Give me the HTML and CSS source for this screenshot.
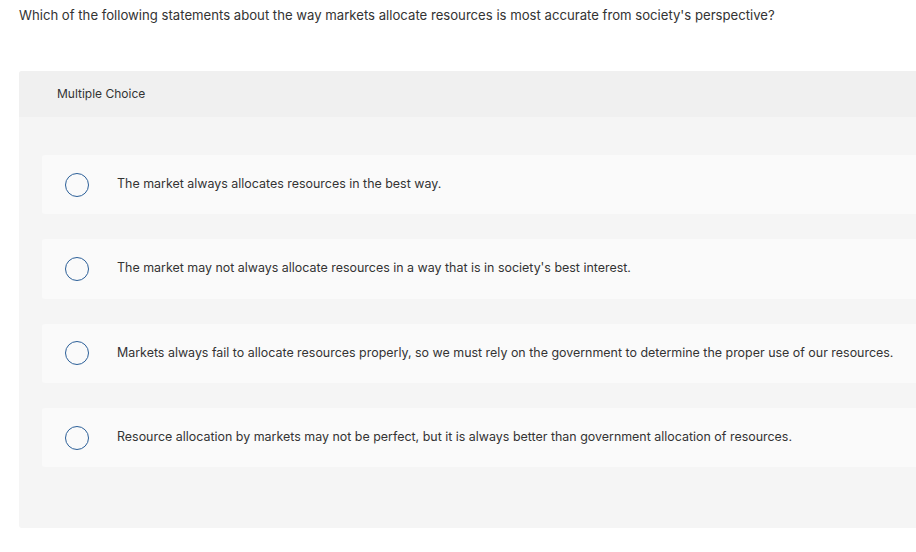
FILE: index.html
```html
<!DOCTYPE html>
<html lang="en">
<head>
  <meta charset="UTF-8">
  <title>Multiple Choice</title>
  <link rel="stylesheet" href="styles.css">
</head>
<body>

  <p class="prompt">Which of the following statements about the way markets allocate resources is most accurate from society's perspective?</p>

  <div class="question">
    <div class="question-head">Multiple Choice</div>
    <div class="choices">
      <label class="choice">
        <span class="radio"></span>
        <span class="choice-text">The market always allocates resources in the best way.</span>
      </label>
      <label class="choice">
        <span class="radio"></span>
        <span class="choice-text">The market may not always allocate resources in a way that is in society's best interest.</span>
      </label>
      <label class="choice">
        <span class="radio"></span>
        <span class="choice-text">Markets always fail to allocate resources properly, so we must rely on the government to determine the proper use of our resources.</span>
      </label>
      <label class="choice">
        <span class="radio"></span>
        <span class="choice-text">Resource allocation by markets may not be perfect, but it is always better than government allocation of resources.</span>
      </label>
    </div>
  </div>

</body>
</html>
```

FILE: styles.css
```css
html, body {
  overflow: hidden;
}

body {
  margin: 0;
  padding: 0 0 0 19px;
  font-family: Inter, "Liberation Sans", Arial, sans-serif;
  color: #333;
  background: #fff;
}

.prompt {
  margin: 0;
  padding-top: 7px;
  font-size: 13.15px;
  line-height: 16px;
  white-space: nowrap;
}

.question {
  margin-top: 48px;
  width: 920px;
  background: #f5f5f5;
  border-radius: 3px;
}

.question-head {
  height: 46px;
  display: flex;
  align-items: center;
  padding: 0 0 2px 38px;
  box-sizing: border-box;
  font-size: 12px;
  background: #f0f0f0;
  border-radius: 3px 3px 0 0;
}

.choices {
  display: flex;
  flex-direction: column;
  gap: 25px;
  padding: 38px 0 61px 23px;
}

.choice {
  height: 59.33px;
  display: flex;
  align-items: center;
  background: #fafafa;
  border-radius: 3px;
  cursor: pointer;
}

.radio {
  width: 22px;
  height: 22px;
  margin-left: 23px;
  border: 1.5px solid #2b5f98;
  border-radius: 50%;
  flex-shrink: 0;
}

.choice-text {
  margin: 0 0 2px 28px;
  font-size: 12.45px;
  white-space: nowrap;
}
```
